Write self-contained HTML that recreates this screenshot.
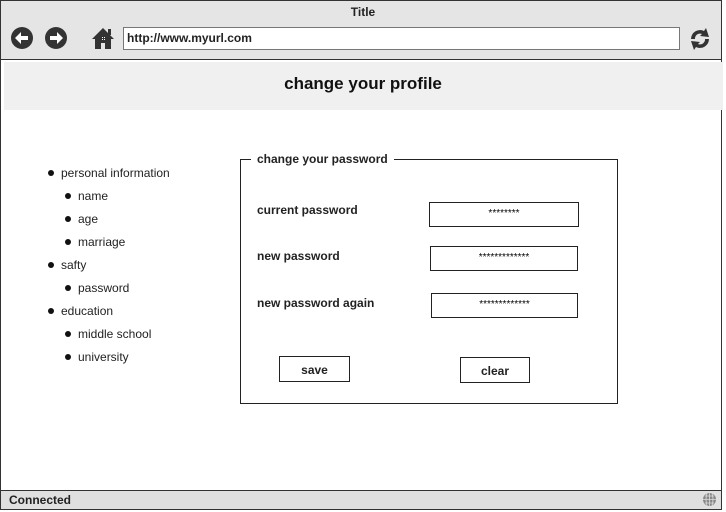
<!DOCTYPE html>
<html><head><style>
*{margin:0;padding:0;box-sizing:border-box}
body{width:726px;height:512px;background:#fff;font-family:"Liberation Sans",Arial,sans-serif;position:relative;overflow:hidden}
.a{position:absolute}
.frame{left:0;top:0;width:722px;height:510px;border:1px solid #333}
.top{left:1px;top:1px;width:720px;height:59px;background:#e5e5e5;border-bottom:1px solid #333}
.lbl{font-size:12px;color:#222}
.b{font-weight:bold}
.dot{width:6px;height:6px;border-radius:50%;background:#111}
.box{border:1px solid #222;background:#fff}
</style></head><body>
<div class="a frame"></div>
<div class="a top"></div>
<div class="a lbl" style="left:0;width:726px;top:5px;text-align:center;font-size:12px;font-weight:bold">Title</div>
<svg class="a" style="left:11px;top:27px" width="58" height="24" viewBox="0 0 58 24">
<circle cx="11" cy="11" r="11" fill="#333"/><path d="M4 11 L10 5 L10 9 L17 9 L17 13 L10 13 L10 17Z" fill="#fff"/>
<circle cx="45" cy="11" r="11" fill="#333"/><path d="M52 11 L46 5 L46 9 L39 9 L39 13 L46 13 L46 17Z" fill="#fff"/>
</svg>
<svg class="a" style="left:91px;top:27px" width="24" height="23" viewBox="0 0 24 23">
<path d="M12 1 L23 12 L20 12 L20 22 L14 22 L14 16 L10 16 L10 22 L4 22 L4 12 L1 12Z" fill="#333"/><rect x="17" y="2" width="3" height="6" fill="#333"/>
<rect x="11" y="10" width="1" height="1" fill="#fff"/><rect x="13" y="10" width="1" height="1" fill="#fff"/><rect x="11" y="12" width="1" height="1" fill="#fff"/><rect x="13" y="12" width="1" height="1" fill="#fff"/>
</svg>
<div class="a" style="left:123px;top:27px;width:557px;height:23px;background:#fff;border:1px solid #777"></div>
<div class="a lbl b" style="left:127px;top:31px;font-size:12px">http://www.myurl.com</div>
<svg class="a" style="left:688px;top:26px" width="24" height="26" viewBox="0 0 24 26">
<path d="M3 13 A9 9 0 0 1 16 5 L18 2 L21 11 L12 10 L14 8 A5 5 0 0 0 7 13Z" fill="#333"/>
<path d="M21 13 A9 9 0 0 1 8 21 L6 24 L3 15 L12 16 L10 18 A5 5 0 0 0 17 13Z" fill="#333"/>
</svg>
<div class="a" style="left:4px;top:62px;width:719px;height:48px;background:#f0f0f0"></div>
<div class="a b" style="left:0;width:726px;top:74px;text-align:center;font-size:17px;color:#111">change your profile</div>

<div class="a dot" style="left:48px;top:170px"></div><div class="a lbl" style="left:61px;top:166px">personal information</div>
<div class="a dot" style="left:65px;top:193px"></div><div class="a lbl" style="left:78px;top:189px">name</div>
<div class="a dot" style="left:65px;top:216px"></div><div class="a lbl" style="left:78px;top:212px">age</div>
<div class="a dot" style="left:65px;top:239px"></div><div class="a lbl" style="left:78px;top:235px">marriage</div>
<div class="a dot" style="left:48px;top:262px"></div><div class="a lbl" style="left:61px;top:258px">safty</div>
<div class="a dot" style="left:65px;top:285px"></div><div class="a lbl" style="left:78px;top:281px">password</div>
<div class="a dot" style="left:48px;top:308px"></div><div class="a lbl" style="left:61px;top:304px">education</div>
<div class="a dot" style="left:65px;top:331px"></div><div class="a lbl" style="left:78px;top:327px">middle school</div>
<div class="a dot" style="left:65px;top:354px"></div><div class="a lbl" style="left:78px;top:350px">university</div>

<div class="a" style="left:240px;top:159px;width:378px;height:245px;border:1px solid #222"></div>
<div class="a lbl b" style="left:251px;top:152px;background:#fff;padding:0 6px">change your password</div>
<div class="a lbl b" style="left:257px;top:203px">current password</div>
<div class="a lbl b" style="left:257px;top:249px">new password</div>
<div class="a lbl b" style="left:257px;top:296px">new password again</div>
<div class="a box" style="left:429px;top:202px;width:150px;height:25px;font-size:10px;text-align:center;padding-top:5px">********</div>
<div class="a box" style="left:430px;top:246px;width:148px;height:25px;font-size:10px;text-align:center;padding-top:5px">*************</div>
<div class="a box" style="left:431px;top:293px;width:147px;height:25px;font-size:10px;text-align:center;padding-top:5px">*************</div>
<div class="a box lbl b" style="left:279px;top:356px;width:71px;height:26px;text-align:center;padding-top:6px">save</div>
<div class="a box lbl b" style="left:460px;top:357px;width:70px;height:26px;text-align:center;padding-top:6px">clear</div>

<div class="a" style="left:1px;top:490px;width:720px;height:19px;background:#e0e0e0;border-top:1px solid #333"></div>
<div class="a lbl b" style="left:9px;top:493px">Connected</div>
<svg class="a" style="left:702px;top:492px" width="15" height="15" viewBox="0 0 15 15"><circle cx="7.5" cy="7.5" r="6.5" fill="#888"/><path d="M1 7.5H14M7.5 1V14M3 4H12M3 11H12M5 1.5Q3 7.5 5 13.5M10 1.5Q12 7.5 10 13.5" stroke="#ddd" stroke-width=".8" fill="none"/></svg>
</body></html>
